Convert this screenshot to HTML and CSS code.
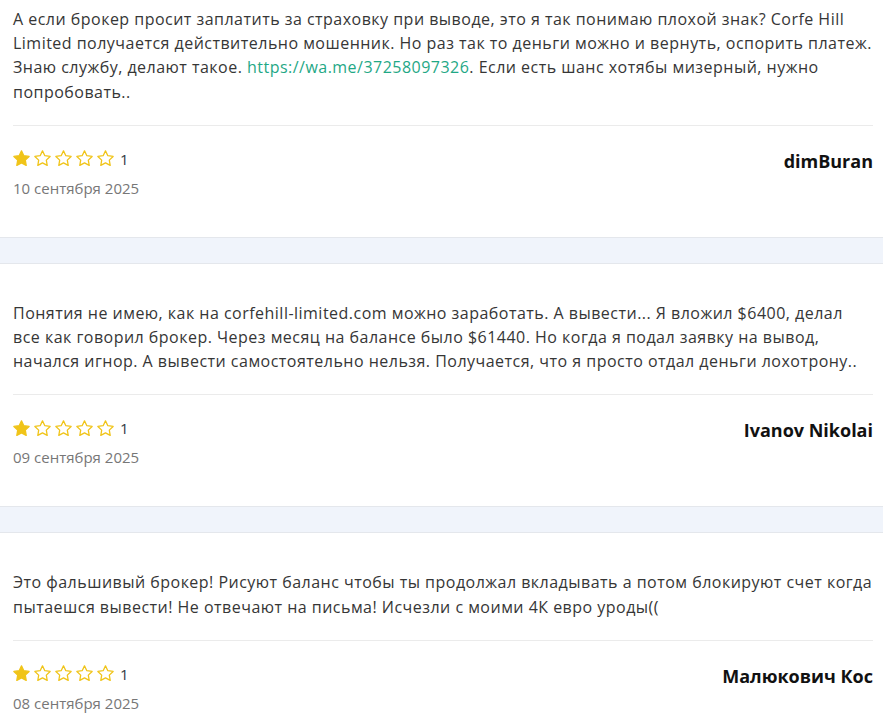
FILE: index.html
```html
<!DOCTYPE html>
<html lang="ru">
<head>
<meta charset="utf-8">
<title>Отзывы</title>
<link rel="stylesheet" href="styles.css">
</head>
<body>
<svg width="0" height="0" class="defs" aria-hidden="true">
  <defs>
    <path id="star" d="M12 2.6l2.9 5.9 6.5.95-4.7 4.58 1.1 6.47L12 17.44l-5.8 3.06 1.1-6.47L2.6 9.45l6.5-.95z"/>
  </defs>
</svg>
<div class="list">
  <article class="review">
    <p class="text">А если брокер просит заплатить за страховку при выводе, это я так понимаю плохой знак? Corfe Hill Limited получается действительно мошенник. Но раз так то деньги можно и вернуть, оспорить платеж. Знаю службу, делают такое. <a class="link" href="#">https://wa.me/37258097326</a>. Если есть шанс хотябы мизерный, нужно попробовать..</p>
    <div class="meta">
      <div class="row">
        <div class="stars">
          <svg class="star full" viewBox="1.5 1.5 21 21"><use href="#star"/></svg>
          <svg class="star" viewBox="1.5 1.5 21 21"><use href="#star"/></svg>
          <svg class="star" viewBox="1.5 1.5 21 21"><use href="#star"/></svg>
          <svg class="star" viewBox="1.5 1.5 21 21"><use href="#star"/></svg>
          <svg class="star" viewBox="1.5 1.5 21 21"><use href="#star"/></svg>
          <span class="score">1</span>
        </div>
        <div class="author">dimBuran</div>
      </div>
      <div class="date">10 сентября 2025</div>
    </div>
  </article>
  <article class="review">
    <p class="text">Понятия не имею, как на corfehill-limited.com можно заработать. А вывести... Я вложил $6400, делал все как говорил брокер. Через месяц на балансе было $61440. Но когда я подал заявку на вывод, начался игнор. А вывести самостоятельно нельзя. Получается, что я просто отдал деньги лохотрону..</p>
    <div class="meta">
      <div class="row">
        <div class="stars">
          <svg class="star full" viewBox="1.5 1.5 21 21"><use href="#star"/></svg>
          <svg class="star" viewBox="1.5 1.5 21 21"><use href="#star"/></svg>
          <svg class="star" viewBox="1.5 1.5 21 21"><use href="#star"/></svg>
          <svg class="star" viewBox="1.5 1.5 21 21"><use href="#star"/></svg>
          <svg class="star" viewBox="1.5 1.5 21 21"><use href="#star"/></svg>
          <span class="score">1</span>
        </div>
        <div class="author">Ivanov Nikolai</div>
      </div>
      <div class="date">09 сентября 2025</div>
    </div>
  </article>
  <article class="review">
    <p class="text">Это фальшивый брокер! Рисуют баланс чтобы ты продолжал вкладывать а потом блокируют счет когда пытаешся вывести! Не отвечают на письма! Исчезли с моими 4К евро уроды((</p>
    <div class="meta">
      <div class="row">
        <div class="stars">
          <svg class="star full" viewBox="1.5 1.5 21 21"><use href="#star"/></svg>
          <svg class="star" viewBox="1.5 1.5 21 21"><use href="#star"/></svg>
          <svg class="star" viewBox="1.5 1.5 21 21"><use href="#star"/></svg>
          <svg class="star" viewBox="1.5 1.5 21 21"><use href="#star"/></svg>
          <svg class="star" viewBox="1.5 1.5 21 21"><use href="#star"/></svg>
          <span class="score">1</span>
        </div>
        <div class="author">Малюкович Кос</div>
      </div>
      <div class="date">08 сентября 2025</div>
    </div>
  </article>
</div>
</body>
</html>
```
FILE: styles.css
```css
html, body {
  margin: 0;
  padding: 0;
  background: #f0f4fb;
}
body {
  font-family: "Open Sans", "Noto Sans", sans-serif;
  color: #363636;
  overflow: hidden;
}
.defs {
  position: absolute;
  width: 0;
  height: 0;
}
.list {
  display: flex;
  flex-direction: column;
  gap: 25px;
  margin-top: -30px;
}
.review {
  background: #ffffff;
  border-top: 1px solid #e4e7ec;
  border-bottom: 1px solid #e4e7ec;
  padding: 37px 10px 38px 13px;
}
.review:first-child {
  border-top: none;
}
.text {
  margin: 0 0 21px;
  font-size: 16px;
  line-height: 24.2px;
  letter-spacing: 0.48px;
}
.link {
  color: #1fa886;
  text-decoration: none;
}
.meta {
  border-top: 1px solid #ebebeb;
  padding-top: 21px;
}
.row {
  display: flex;
  justify-content: space-between;
  align-items: center;
  height: 24px;
}
.stars {
  display: flex;
  align-items: center;
  gap: 4px;
}
.star {
  width: 17px;
  height: 17px;
  display: block;
}
.star use {
  fill: none;
  stroke: #f0c419;
  stroke-width: 1.6;
  stroke-linejoin: round;
}
.star.full use {
  fill: #f0c419;
}
.score {
  margin-left: 2px;
  font-size: 15px;
  color: #333a44;
  line-height: 20px;
}
.author {
  font-size: 18px;
  font-weight: 700;
  color: #111111;
  line-height: 24px;
  padding-top: 4px;
}
.date {
  margin-top: 6px;
  font-size: 15px;
  line-height: 22px;
  color: #777777;
}
```
